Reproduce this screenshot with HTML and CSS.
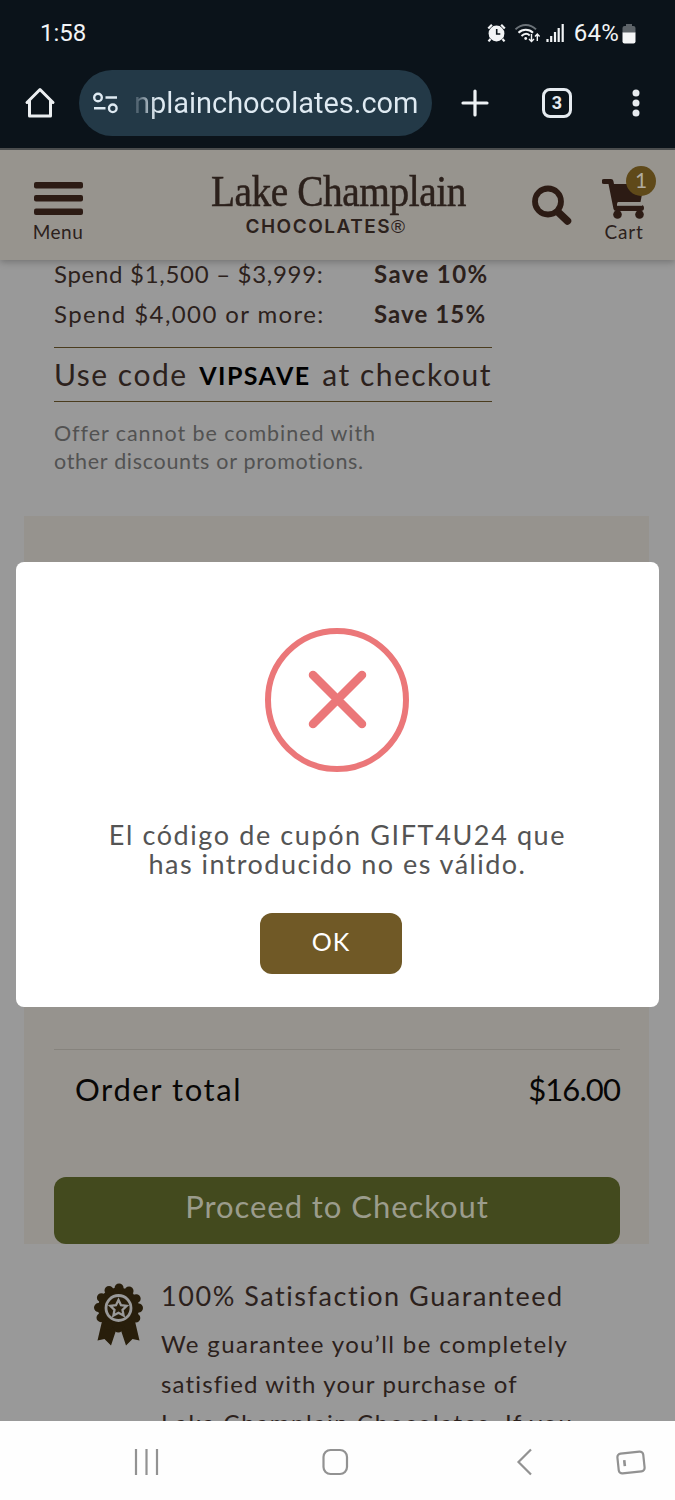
FILE: index.html
```html
<!DOCTYPE html>
<html lang="es">
<head>
<meta charset="utf-8">
<title>Lake Champlain Chocolates</title>
<link rel="stylesheet" href="styles.css">
</head>
<body>
<div class="phone">
  <div class="status">
    <span class="clock">1:58</span>
    <svg class="status-icons" width="112" height="24" viewBox="486 21 112 24" fill="none">
      <circle cx="496.5" cy="33.5" r="7.9" fill="#f2f4f6"/>
      <path d="M488.3 28.6l3.6-3.8M504.8 28.6l-3.6-3.8M490.5 39l-2 2.4M502.5 39l2 2.4" stroke="#f2f4f6" stroke-width="2.2"/>
      <path d="M496.7 29v5h3.6" stroke="#0b131a" stroke-width="1.6"/>
      <path d="M515.5 29.4c6-6 14.500-6 20.500 0" stroke="#6b7278" stroke-width="2"/>
      <path d="M518.500 32.700c4-4 10.500-4 14.500 0M521.500 36c2.800-2.600 6-2.600 8.200-.6" stroke="#f2f4f6" stroke-width="2"/>
      <circle cx="525.700" cy="38.500" r="1.400" fill="#f2f4f6"/>
      <path d="M531.500 34v7.200M529 39l2.500 2.500L534 39M537.300 41v-7M535 36.500l2.300-2.500 2.300 2.500" stroke="#f2f4f6" stroke-width="1.400"/>
      <path d="M547.500 39v3M551.200 36v6M555 32v10M558.700 28v14M562.700 24v18" stroke="#f2f4f6" stroke-width="2.200"/>
    </svg>
    <span class="percent">64%</span>
    <svg class="battery" width="14" height="21" viewBox="0 0 14 21"><path d="M4 1h6v2h1.500A2 2 0 0 1 13.500 5v5H.5V5a2 2 0 0 1 2-2H4z" fill="#5d6368"/><path d="M.5 9.500h13v9a2 2 0 0 1-2 2h-9a2 2 0 0 1-2-2z" fill="#f5f6f7"/></svg>
  </div>
  <div class="toolbar">
    <svg class="home" width="32" height="32" viewBox="0 0 32 32" fill="none" stroke="#eceff1" stroke-width="3" stroke-linejoin="round" stroke-linecap="round"><path d="M3 15.500L16 2.500 29 15.500M5.500 14v15h21V14"/></svg>
    <div class="address">
      <svg width="26" height="22" viewBox="0 0 26 22" fill="none" stroke="#dfeaf2" stroke-width="2.400"><circle cx="5" cy="5.500" r="3.800"/><path d="M12.500 5.500H24M1 16.300h11.500"/><circle cx="19.800" cy="16.300" r="3.800"/></svg>
      <span class="url">nplainchocolates.com</span>
    </div>
    <svg class="plus" width="28" height="28" viewBox="0 0 28 28" stroke="#edf1f4" stroke-width="3.200" stroke-linecap="round"><path d="M14 2v24M2 14h24"/></svg>
    <span class="tabs">3</span>
    <svg class="dots" width="8" height="28" viewBox="0 0 8 28" fill="#e6eaee"><circle cx="4" cy="4" r="3.500"/><circle cx="4" cy="14" r="3.500"/><circle cx="4" cy="24" r="3.500"/></svg>
  </div>

  <div class="site">
    <header class="header">
      <div class="menu">
        <svg width="49" height="34" viewBox="0 0 49 34" fill="#2c1b14"><rect width="49" height="6.500" rx="2"/><rect y="13" width="49" height="6.500" rx="2"/><rect y="26.500" width="49" height="6.500" rx="2"/></svg>
        <span>Menu</span>
      </div>
      <div class="logo">
        <span class="brand">Lake Champlain</span>
        <span class="sub">CHOCOLATES<span class="reg">®</span></span>
      </div>
      <svg class="search" width="40" height="41" viewBox="0 0 40 41" fill="none" stroke="#2c1b14"><circle cx="16" cy="16.500" r="13" stroke-width="5.800"/><path d="M26 27l9.500 9" stroke-width="7.500" stroke-linecap="round"/></svg>
      <div class="cart">
        <svg width="44" height="41" viewBox="0 0 44 41" fill="#2c1b14"><path d="M2 0h7q2 0 2.400 2l.6 3h30l-3.500 18h-23l.5 3H39a2 2 0 0 1 0 6H14q-2 0-2.500-2L6.500 5H2a2.500 2.500 0 0 1 0-5z"/><path d="M15 25.500h25" stroke="#97948e" stroke-width="2.600"/><circle cx="15.500" cy="35.500" r="4.300"/><circle cx="37.500" cy="35.500" r="4.300"/></svg>
        <span>Cart</span>
        <b class="badge">1</b>
      </div>
    </header>

    <main class="page">
      <section class="offer">
        <div class="tier"><span class="tier-a">Spend $1,500 – $3,999:</span><b class="save-a">Save 10%</b></div>
        <div class="tier"><span class="tier-b">Spend $4,000 or more:</span><b class="save-b">Save 15%</b></div>
        <div class="code"><span>Use code</span><b>VIPSAVE</b><span>at checkout</span></div>
        <p class="terms"><span class="terms-a">Offer cannot be combined with</span><br><span class="terms-b">other discounts or promotions.</span></p>
      </section>
      <section class="summary">
        <div class="total"><span class="total-label">Order total</span><span class="total-value">$16.00</span></div>
        <div class="checkout">Proceed to Checkout</div>
      </section>
      <section class="guarantee">
        <svg class="ribbon" width="52" height="64" viewBox="0 0 52 64">
          <path d="M11 34L5.500 57.500l7-1.500 6.500 6.500 5-15h5l5 15 6.500-6.500 7 1.500L42 34z" fill="#281e0b"/>
          <circle cx="26.500" cy="25" r="20.500" fill="#281e0b"/>
          <circle cx="26.500" cy="25" r="20" fill="none" stroke="#281e0b" stroke-width="9" stroke-dasharray="0 10.472" stroke-linecap="round"/>
          <circle cx="26.500" cy="25" r="12.500" fill="none" stroke="#999" stroke-width="2.800"/>
          <path d="M26.500 17l2.500 5.200 5.700.7-4.200 3.900 1.100 5.700-5.100-2.800-5.100 2.800 1.100-5.700-4.200-3.900 5.700-.7z" fill="none" stroke="#999" stroke-width="2.300"/>
        </svg>
        <div class="promise">
          <h2>100% Satisfaction Guaranteed</h2>
          <p><span class="p-a">We guarantee you’ll be completely</span><br><span class="p-b">satisfied with your purchase of</span><br><span class="p-c">Lake Champlain Chocolates. If you</span></p>
        </div>
      </section>
    </main>
    <div class="modal">
      <svg class="error" width="144" height="144" viewBox="0 0 144 144" fill="none" stroke="#eb7779"><circle cx="72" cy="72" r="69" stroke-width="6"/><path d="M48 47l49 49M97 47L48 96" stroke-width="8.500" stroke-linecap="round"/></svg>
      <p class="message"><span class="m-a">El código de cupón GIFT4U24 que</span><br><span class="m-b">has introducido no es válido.</span></p>
      <div class="ok">OK</div>
    </div>
  </div>

  <nav class="nav">
    <svg width="675" height="79" viewBox="0 1421 675 79" fill="none" stroke="#929292" stroke-width="2.200">
      <path d="M136 1449v26M146.500 1449v26M157 1449v26"/>
      <rect x="323.500" y="1450" width="23.500" height="24" rx="7"/>
      <path d="M531 1449.500L518.500 1462l12.500 12.500"/>
      <g transform="rotate(-6 631 1462.500)"><rect x="618" y="1452.500" width="26" height="20" rx="3.500"/><path d="M624.500 1459.500v6" stroke-width="2.600"/></g>
    </svg>
  </nav>
</div>
</body>
</html>
```

FILE: styles.css
```css
* { box-sizing: border-box; }
body { margin: 0; font-family: Lato, sans-serif; }
svg { display: block; flex: none; }
span, b { white-space: nowrap; }
.phone { width: 675px; height: 1500px; display: flex; flex-direction: column; background: #0b131a; overflow: hidden; }

.status { height: 66px; display: flex; align-items: center; padding: 0 39px 0 40px; font-family: Roboto, sans-serif; font-size: 24px; color: #f2f4f6; }
.clock { flex: 1; }
.status-icons { margin-right: -24px; }
.percent { margin-right: 3px; letter-spacing: .2px; }
.toolbar { height: 84px; flex: none; display: flex; align-items: center; padding: 0 0 8px 24px; border-bottom: 2px solid #4b4d4e; }
.address { width: 353px; height: 66px; margin-left: 23px; border-radius: 33px; background: #233947; display: flex; align-items: center; padding-left: 14px; gap: 15px; }
.url { font-family: Roboto, sans-serif; font-size: 29px; letter-spacing: -.03px; background: linear-gradient(90deg, #3a4e5c, #dfeaf2 22px); -webkit-background-clip: text; background-clip: text; color: transparent; }
.plus { margin-left: 29px; }
.tabs { width: 30px; height: 30px; margin-left: 53px; border: 3px solid #e6ebf0; border-radius: 8px; font: bold 18px/24px Roboto, sans-serif; text-align: center; color: #e6ebf0; }
.dots { margin-left: 60px; }

.site { position: relative; height: 1271px; flex: none; display: flex; flex-direction: column; background: #999; overflow: hidden; color: #2c211c; }
.header { position: relative; height: 110px; flex: none; display: flex; align-items: flex-start; background: #97948e; box-shadow: 0 2px 7px rgba(0,0,0,.25); }
.menu { width: 60px; margin: 32px 0 0 28px; display: flex; flex-direction: column; align-items: center; gap: 4px; font-size: 19px; line-height: 24px; letter-spacing: .5px; }
.logo { width: 256px; margin: 18px 0 0 122px; display: flex; flex-direction: column; align-items: center; }
.brand { font: 44px/48px "Liberation Serif", serif; letter-spacing: -.5px; -webkit-text-stroke: .5px #2c211c; transform: scaleX(.895); }
.sub { margin: 1px 24px 0 0; font: 600 19px/20px Inter, sans-serif; letter-spacing: 1.500px; }
.reg { font: 400 19px/20px "Liberation Sans", sans-serif; }
.search { margin: 35px 0 0 66px; }
.cart { position: relative; width: 44px; margin: 29px 0 0 30px; display: flex; flex-direction: column; align-items: center; font-size: 19px; line-height: 24px; letter-spacing: .8px; }
.badge { position: absolute; left: 24px; top: -13px; width: 30px; height: 30px; border-radius: 50%; background: #5f4919; color: #b0aba0; font-weight: 400; font-size: 21px; line-height: 28px; text-align: center; letter-spacing: 0; }

.page { flex: none; display: flex; flex-direction: column; }
.offer { height: 256px; padding-left: 54px; }
.tier { display: flex; width: 436px; font-size: 24px; line-height: 28px; margin-bottom: 12px; }
.tier > span { width: 320px; }
.tier-a { letter-spacing: .7px; }
.tier-b { letter-spacing: 1.400px; }
.save-a { letter-spacing: 1.400px; }
.save-b { letter-spacing: 1.100px; }
.code { display: flex; justify-content: space-between; width: 438px; height: 55px; margin-top: 19px; border-top: 1px solid #4a3c1e; border-bottom: 1px solid #4a3c1e; font-size: 30px; line-height: 52px; letter-spacing: 1.500px; }
.code b { font-size: 25px; line-height: 54px; letter-spacing: 1.400px; color: #000; }
.terms { margin: 17px 0 0; font-size: 21.500px; line-height: 28px; color: #525252; }
.terms-a { letter-spacing: .95px; }
.terms-b { letter-spacing: .7px; }
.summary { height: 728px; margin: 0 26px 0 24px; padding: 533px 29px 0 30px; background: #96938e; }
.total { height: 80px; padding-left: 21px; border-top: 1px solid #86837d; display: flex; justify-content: space-between; font-size: 31px; line-height: 78px; color: #080706; }
.total-label { letter-spacing: 1.600px; }
.total-value { letter-spacing: -.9px; }
.checkout { height: 67px; margin-top: 48px; border-radius: 12px; background: #434a1e; color: #9b9c8c; font-size: 31px; line-height: 59px; letter-spacing: .95px; text-align: center; }
.guarantee { display: flex; padding: 39px 0 0 92px; gap: 17px; }
.promise h2 { margin: -3px 0 0; font-size: 27px; line-height: 32px; font-weight: 400; letter-spacing: 1.550px; white-space: nowrap; }
.promise p { margin: 12px 0 0; font-size: 24px; line-height: 39.500px; }
.p-a { letter-spacing: 1.350px; }
.p-b { letter-spacing: 1.150px; }
.p-c { letter-spacing: 1.600px; }

.modal { position: absolute; left: 16px; top: 412px; width: 643px; height: 445px; padding-top: 66px; border-radius: 8px; background: #fff; display: flex; flex-direction: column; align-items: center; }
.error { margin-right: 1px; }
.message { margin: 48px 0 0; font-size: 27px; line-height: 29px; text-align: center; color: #545454; }
.m-a { letter-spacing: 1.600px; }
.m-b { letter-spacing: 1.450px; }
.ok { width: 142px; height: 61px; margin: 35px 13px 0 0; border-radius: 12px; background: #705926; color: #fff; font-size: 25px; line-height: 56px; letter-spacing: 1px; text-align: center; }
.nav { height: 79px; flex: none; background: #fefefe; }
```
